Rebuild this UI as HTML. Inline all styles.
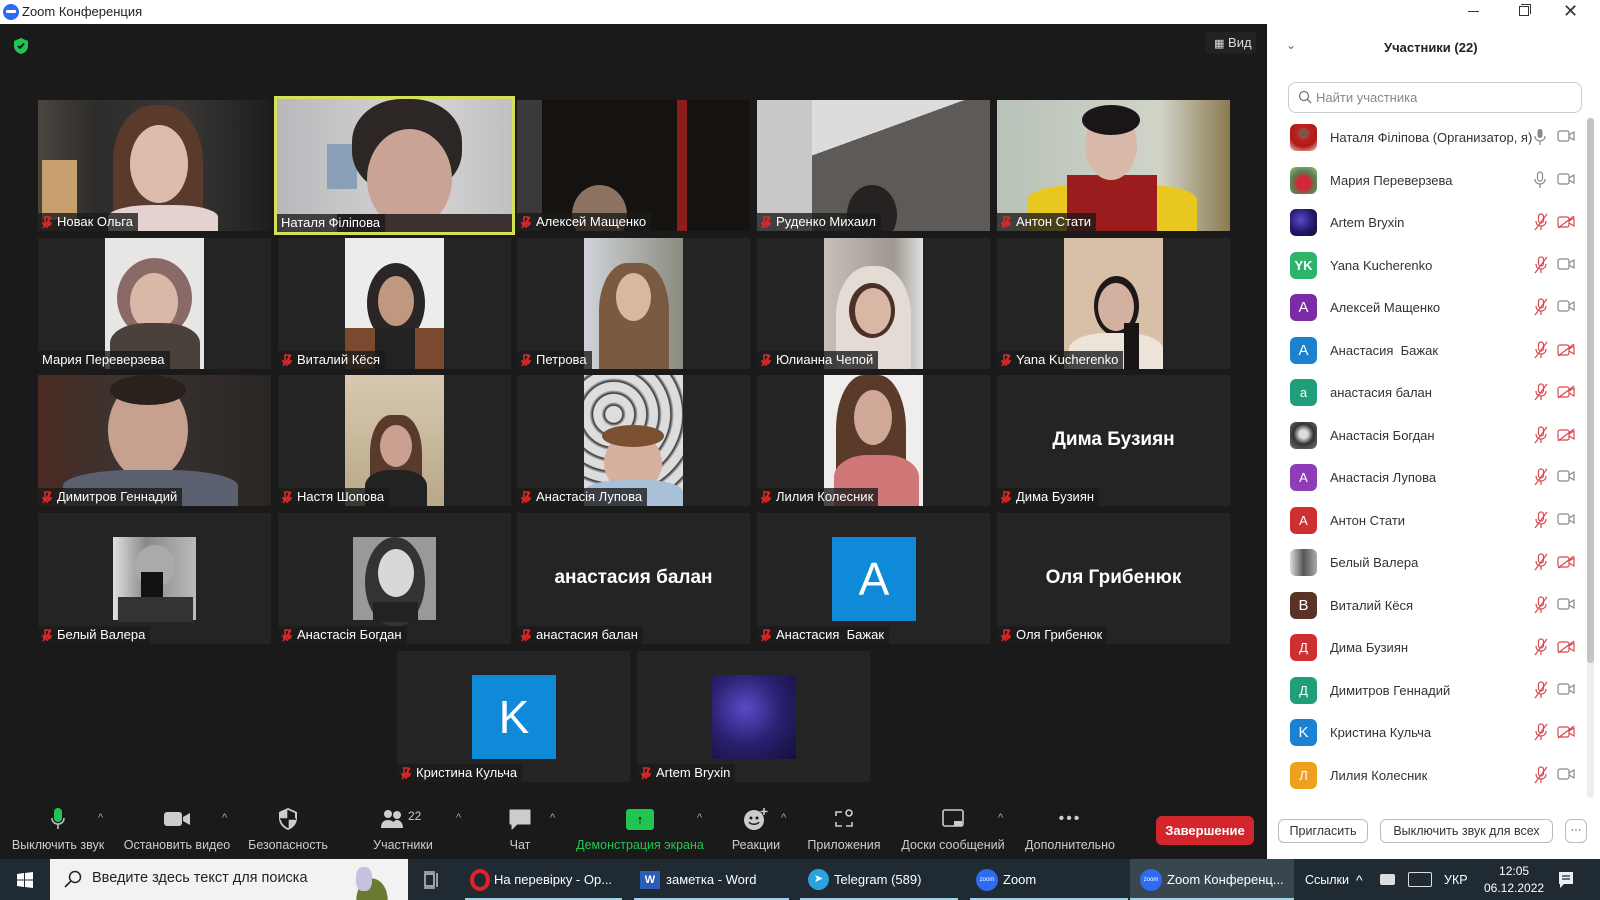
<!DOCTYPE html>
<html><head><meta charset="utf-8">
<style>
*{margin:0;padding:0;box-sizing:border-box}
body{width:1600px;height:900px;overflow:hidden;background:#1a1a1a;font-family:"Liberation Sans","DejaVu Sans",sans-serif;position:relative}
.abs{position:absolute}
#title{left:0;top:0;width:1600px;height:24px;background:#fff;font-size:13px;color:#222}
#main{left:0;top:24px;width:1267px;height:835px;background:#1a1a1a}
.t{position:absolute;width:233px;height:131px;background:#242424;overflow:hidden}
.ph{position:absolute;left:67px;top:0;width:99px;height:131px;overflow:hidden}
.f{position:absolute;border-radius:50%}
.lb{position:absolute;left:0;bottom:0;height:18px;line-height:18px;background:rgba(25,25,25,.78);color:#fff;font-size:13px;padding:0 5px 0 4px;white-space:nowrap;display:flex;align-items:center}
.lb svg{margin-right:5px}
.big{position:absolute;left:0;right:0;top:54px;text-align:center;color:#fff;font-weight:bold;font-size:19px}
.tb{position:absolute;top:806px;color:#ccc;font-size:12.5px;text-align:center;white-space:nowrap}
.tb .ic{height:26px;display:flex;justify-content:center;align-items:center}
.tb .lab{margin-top:6px}
.car{position:absolute;top:812px;color:#aaa;font-size:11px}
#panel{left:1267px;top:24px;width:333px;height:835px;background:#fff}
.row{position:absolute;left:1290px;height:27px;display:flex;align-items:center;width:300px}
.av{width:27px;height:27px;border-radius:6px;color:#fff;font-size:15px;display:flex;align-items:center;justify-content:center;flex:none}
.nm{margin-left:13px;font-size:13px;color:#333;white-space:nowrap}
.mi{position:absolute;left:244px;top:4px}
.ca{position:absolute;left:267px;top:6px}
#task{left:0;top:859px;width:1600px;height:41px;background:#1f2a32}
.tk{position:absolute;top:0;height:41px;display:flex;align-items:center;color:#fff;font-size:13px;white-space:nowrap}
.ul{position:absolute;bottom:0;height:2px;background:#9fd3ea}
</style></head><body>

<div id="title" class="abs">
  <div class="abs" style="left:3px;top:4px;width:16px;height:16px;border-radius:50%;background:#2d6bf0"></div>
  <div class="abs" style="left:6px;top:10px;width:10px;height:3px;background:#fff;border-radius:1px"></div>
  <div class="abs" style="left:22px;top:4px">Zoom Конференция</div>
  <div class="abs" style="left:1468px;top:11px;width:11px;height:1px;background:#333"></div>
  <div class="abs" style="left:1519px;top:6px;width:10px;height:10px;border:1px solid #333"></div>
  <div class="abs" style="left:1521px;top:4px;width:10px;height:10px;border-top:1px solid #333;border-right:1px solid #333"></div>
  <div class="abs" style="left:1563px;top:1px;font-size:18px;color:#333">✕</div>
</div>

<div id="main" class="abs">
  <svg class="abs" style="left:13px;top:13px" width="16" height="18" viewBox="0 0 16 18"><path d="M8 1 L15 4 V9 C15 13 12 16 8 17 C4 16 1 13 1 9 V4 Z" fill="#23c552"/><path d="M5 9 L7 11 L11 6.5" stroke="#111" stroke-width="1.8" fill="none"/></svg>
  <div class="abs" style="left:1206px;top:8px;width:50px;height:22px;border-radius:4px;background:#222;color:#ddd;font-size:13px;line-height:22px;padding-left:8px"><span style="font-size:11px">▦</span> Вид</div>
</div>

<!-- ROW 1 -->
<div class="t" style="left:38px;top:100px;background:linear-gradient(90deg,#4a4540 0,#2e2c2a 25%,#3a3836 60%,#1e1e1e 100%)">
  <div class="abs" style="left:4px;top:60px;width:35px;height:60px;background:#c8a070"></div>
  <div class="f" style="left:75px;top:5px;width:90px;height:125px;background:#5a3a2a;border-radius:45% 45% 10% 10%"></div>
  <div class="f" style="left:92px;top:25px;width:58px;height:78px;background:#dcbcad"></div>
  <div class="abs" style="left:70px;top:105px;width:110px;height:30px;background:#e4d2d0;border-radius:40% 40% 0 0"></div>
  <div class="lb"><svg width="10" height="13" viewBox="0 0 10 13"><path d="M3 1h4v7H3z M1 6c0 3 2 4 4 4s4-1 4-4 M5 10v2 M1 12L9 1" stroke="#e02828" stroke-width="1.6" fill="none"/></svg>Новак Ольга</div>
</div>
<div class="t" style="left:274px;top:96px;width:241px;height:139px;background:#d4e157;padding:3px">
  <div style="position:relative;width:235px;height:133px;overflow:hidden;background:linear-gradient(90deg,#b8b8bc,#d6d6d6 60%,#c0c0c2)">
    <div class="abs" style="left:50px;top:45px;width:30px;height:45px;background:#8aa0b8"></div>
    <div class="f" style="left:75px;top:0;width:110px;height:95px;background:#2c2624;border-radius:45%"></div>
    <div class="f" style="left:90px;top:30px;width:85px;height:100px;background:#c9a496"></div>
    <div class="abs" style="left:60px;top:115px;width:175px;height:20px;background:#3a3030"></div>
    <div class="lb" style="color:#fff">Наталя Філіпова</div>
  </div>
</div>
<div class="t" style="left:517px;top:100px;background:#15120f">
  <div class="abs" style="left:0;top:0;width:25px;height:131px;background:#3a3a3a"></div>
  <div class="abs" style="left:160px;top:0;width:10px;height:131px;background:#8a1e1a"></div>
  <div class="f" style="left:55px;top:85px;width:55px;height:60px;background:#8c7260"></div>
  <div class="lb"><svg width="10" height="13" viewBox="0 0 10 13"><path d="M3 1h4v7H3z M1 6c0 3 2 4 4 4s4-1 4-4 M5 10v2 M1 12L9 1" stroke="#e02828" stroke-width="1.6" fill="none"/></svg>Алексей Мащенко</div>
</div>
<div class="t" style="left:757px;top:100px;background:#5e5a58">
  <div class="abs" style="left:0;top:0;width:233px;height:131px;background:linear-gradient(160deg,#dcdcdc 0,#dcdcdc 35%,transparent 35%)"></div>
  <div class="abs" style="left:0;top:0;width:55px;height:131px;background:#c8c8c8"></div>
  <div class="f" style="left:90px;top:85px;width:50px;height:60px;background:#262222"></div>
  <div class="lb"><svg width="10" height="13" viewBox="0 0 10 13"><path d="M3 1h4v7H3z M1 6c0 3 2 4 4 4s4-1 4-4 M5 10v2 M1 12L9 1" stroke="#e02828" stroke-width="1.6" fill="none"/></svg>Руденко Михаил</div>
</div>
<div class="t" style="left:997px;top:100px;background:linear-gradient(90deg,#b8c2b8,#d0d4c8 70%,#8a7a50)">
  <div class="abs" style="left:30px;top:85px;width:170px;height:50px;background:#e8c820;border-radius:30% 30% 0 0"></div>
  <div class="abs" style="left:70px;top:75px;width:90px;height:60px;background:#9a1c1c"></div>
  <div class="f" style="left:88px;top:10px;width:52px;height:70px;background:#d8b8a8"></div>
  <div class="f" style="left:85px;top:5px;width:58px;height:30px;background:#1a1618"></div>
  <div class="lb"><svg width="10" height="13" viewBox="0 0 10 13"><path d="M3 1h4v7H3z M1 6c0 3 2 4 4 4s4-1 4-4 M5 10v2 M1 12L9 1" stroke="#e02828" stroke-width="1.6" fill="none"/></svg>Антон Стати</div>
</div>

<!-- ROW 2 -->
<div class="t" style="left:38px;top:238px">
  <div class="ph" style="background:#e8e6e4"><div class="f" style="left:12px;top:20px;width:75px;height:80px;background:#8a6a66"></div><div class="f" style="left:25px;top:35px;width:48px;height:58px;background:#dab8a8"></div><div class="abs" style="left:5px;top:85px;width:90px;height:50px;background:#4a403c;border-radius:40% 40% 0 0"></div></div>
  <div class="lb">Мария Переверзева</div>
</div>
<div class="t" style="left:278px;top:238px">
  <div class="ph" style="background:#ececec"><div class="f" style="left:22px;top:25px;width:58px;height:80px;background:#2a2626"></div><div class="f" style="left:33px;top:38px;width:36px;height:50px;background:#c09880"></div><div class="abs" style="left:0;top:90px;width:99px;height:45px;background:#7a4a30"></div><div class="abs" style="left:30px;top:90px;width:40px;height:45px;background:#222"></div></div>
  <div class="lb"><svg width="10" height="13" viewBox="0 0 10 13"><path d="M3 1h4v7H3z M1 6c0 3 2 4 4 4s4-1 4-4 M5 10v2 M1 12L9 1" stroke="#e02828" stroke-width="1.6" fill="none"/></svg>Виталий Кёся</div>
</div>
<div class="t" style="left:517px;top:238px">
  <div class="ph" style="background:linear-gradient(90deg,#d0d4d8,#8a8a80)"><div class="f" style="left:15px;top:25px;width:70px;height:120px;background:#7a5a40;border-radius:40% 40% 10% 10%"></div><div class="f" style="left:32px;top:35px;width:35px;height:48px;background:#d8b8a0"></div></div>
  <div class="lb"><svg width="10" height="13" viewBox="0 0 10 13"><path d="M3 1h4v7H3z M1 6c0 3 2 4 4 4s4-1 4-4 M5 10v2 M1 12L9 1" stroke="#e02828" stroke-width="1.6" fill="none"/></svg>Петрова</div>
</div>
<div class="t" style="left:757px;top:238px">
  <div class="ph" style="background:linear-gradient(90deg,#c8c0b8,#a09890 70%,#e0e0e0)"><div class="f" style="left:12px;top:28px;width:75px;height:110px;background:#e4dcd4;border-radius:45% 45% 10% 10%"></div><div class="f" style="left:25px;top:45px;width:46px;height:55px;background:#4a3028"></div><div class="f" style="left:31px;top:50px;width:36px;height:46px;background:#d8b8a4"></div></div>
  <div class="lb"><svg width="10" height="13" viewBox="0 0 10 13"><path d="M3 1h4v7H3z M1 6c0 3 2 4 4 4s4-1 4-4 M5 10v2 M1 12L9 1" stroke="#e02828" stroke-width="1.6" fill="none"/></svg>Юлианна Чепой</div>
</div>
<div class="t" style="left:997px;top:238px">
  <div class="ph" style="background:#d8c0a8"><div class="f" style="left:30px;top:38px;width:45px;height:60px;background:#1e1818"></div><div class="f" style="left:34px;top:45px;width:36px;height:48px;background:#d4b0a0"></div><div class="abs" style="left:5px;top:95px;width:94px;height:40px;background:#ece4d8;border-radius:40% 40% 0 0"></div><div class="abs" style="left:60px;top:85px;width:15px;height:50px;background:#181414"></div></div>
  <div class="lb"><svg width="10" height="13" viewBox="0 0 10 13"><path d="M3 1h4v7H3z M1 6c0 3 2 4 4 4s4-1 4-4 M5 10v2 M1 12L9 1" stroke="#e02828" stroke-width="1.6" fill="none"/></svg>Yana Kucherenko</div>
</div>

<!-- ROW 3 -->
<div class="t" style="left:38px;top:375px;background:linear-gradient(90deg,#4a2a22,#3a3432 40%,#2a2624)">
  <div class="f" style="left:70px;top:5px;width:80px;height:100px;background:#c8a090"></div>
  <div class="f" style="left:72px;top:0;width:76px;height:30px;background:#2a201c"></div>
  <div class="abs" style="left:25px;top:95px;width:175px;height:40px;background:#5a6070;border-radius:40% 40% 0 0"></div>
  <div class="lb"><svg width="10" height="13" viewBox="0 0 10 13"><path d="M3 1h4v7H3z M1 6c0 3 2 4 4 4s4-1 4-4 M5 10v2 M1 12L9 1" stroke="#e02828" stroke-width="1.6" fill="none"/></svg>Димитров Геннадий</div>
</div>
<div class="t" style="left:278px;top:375px">
  <div class="ph" style="background:linear-gradient(#d8c8b0,#b8a888)"><div class="f" style="left:25px;top:40px;width:52px;height:95px;background:#5a3a2a;border-radius:40% 40% 10% 10%"></div><div class="f" style="left:35px;top:50px;width:32px;height:42px;background:#caa090"></div><div class="abs" style="left:20px;top:95px;width:62px;height:40px;background:#222;border-radius:40% 40% 0 0"></div></div>
  <div class="lb"><svg width="10" height="13" viewBox="0 0 10 13"><path d="M3 1h4v7H3z M1 6c0 3 2 4 4 4s4-1 4-4 M5 10v2 M1 12L9 1" stroke="#e02828" stroke-width="1.6" fill="none"/></svg>Настя Шопова</div>
</div>
<div class="t" style="left:517px;top:375px">
  <div class="ph" style="background:repeating-radial-gradient(circle at 30% 30%,#ddd 0,#ddd 8px,#333 9px,#ccc 12px)"><div class="f" style="left:20px;top:58px;width:58px;height:60px;background:#d8b0a0"></div><div class="f" style="left:18px;top:50px;width:62px;height:22px;background:#7a5030"></div><div class="abs" style="left:0;top:105px;width:99px;height:30px;background:#a8c0d8;border-radius:40% 40% 0 0"></div></div>
  <div class="lb"><svg width="10" height="13" viewBox="0 0 10 13"><path d="M3 1h4v7H3z M1 6c0 3 2 4 4 4s4-1 4-4 M5 10v2 M1 12L9 1" stroke="#e02828" stroke-width="1.6" fill="none"/></svg>Анастасія Лупова</div>
</div>
<div class="t" style="left:757px;top:375px">
  <div class="ph" style="background:#f0eeec"><div class="f" style="left:12px;top:0;width:70px;height:135px;background:#5a3a28;border-radius:40% 40% 10% 10%"></div><div class="f" style="left:30px;top:15px;width:38px;height:55px;background:#d0a898"></div><div class="abs" style="left:10px;top:80px;width:85px;height:55px;background:#d07878;border-radius:40% 40% 0 0"></div></div>
  <div class="lb"><svg width="10" height="13" viewBox="0 0 10 13"><path d="M3 1h4v7H3z M1 6c0 3 2 4 4 4s4-1 4-4 M5 10v2 M1 12L9 1" stroke="#e02828" stroke-width="1.6" fill="none"/></svg>Лилия Колесник</div>
</div>
<div class="t" style="left:997px;top:375px">
  <div class="big">Дима Бузиян</div>
  <div class="lb"><svg width="10" height="13" viewBox="0 0 10 13"><path d="M3 1h4v7H3z M1 6c0 3 2 4 4 4s4-1 4-4 M5 10v2 M1 12L9 1" stroke="#e02828" stroke-width="1.6" fill="none"/></svg>Дима Бузиян</div>
</div>

<!-- ROW 4 -->
<div class="t" style="left:38px;top:513px">
  <div class="abs" style="left:75px;top:24px;width:83px;height:83px;background:linear-gradient(90deg,#e0e0e0,#888 40%,#bbb)"><div class="f" style="left:22px;top:8px;width:40px;height:42px;background:#aaa"></div><div class="abs" style="left:28px;top:35px;width:22px;height:30px;background:#111"></div><div class="abs" style="left:5px;top:60px;width:75px;height:25px;background:#333"></div></div>
  <div class="lb"><svg width="10" height="13" viewBox="0 0 10 13"><path d="M3 1h4v7H3z M1 6c0 3 2 4 4 4s4-1 4-4 M5 10v2 M1 12L9 1" stroke="#e02828" stroke-width="1.6" fill="none"/></svg>Белый Валера</div>
</div>
<div class="t" style="left:278px;top:513px">
  <div class="abs" style="left:75px;top:24px;width:83px;height:83px;background:#999"><div class="f" style="left:12px;top:0;width:60px;height:90px;background:#333"></div><div class="f" style="left:25px;top:12px;width:36px;height:48px;background:#d8d8d8"></div><div class="abs" style="left:20px;top:65px;width:45px;height:20px;background:#222"></div></div>
  <div class="lb"><svg width="10" height="13" viewBox="0 0 10 13"><path d="M3 1h4v7H3z M1 6c0 3 2 4 4 4s4-1 4-4 M5 10v2 M1 12L9 1" stroke="#e02828" stroke-width="1.6" fill="none"/></svg>Анастасія Богдан</div>
</div>
<div class="t" style="left:517px;top:513px">
  <div class="big">анастасия балан</div>
  <div class="lb"><svg width="10" height="13" viewBox="0 0 10 13"><path d="M3 1h4v7H3z M1 6c0 3 2 4 4 4s4-1 4-4 M5 10v2 M1 12L9 1" stroke="#e02828" stroke-width="1.6" fill="none"/></svg>анастасия балан</div>
</div>
<div class="t" style="left:757px;top:513px">
  <div class="abs" style="left:75px;top:24px;width:84px;height:84px;background:#0e8ad8;color:#fff;font-size:46px;text-align:center;line-height:84px">A</div>
  <div class="lb"><svg width="10" height="13" viewBox="0 0 10 13"><path d="M3 1h4v7H3z M1 6c0 3 2 4 4 4s4-1 4-4 M5 10v2 M1 12L9 1" stroke="#e02828" stroke-width="1.6" fill="none"/></svg>Анастасия&nbsp; Бажак</div>
</div>
<div class="t" style="left:997px;top:513px">
  <div class="big">Оля Грибенюк</div>
  <div class="lb"><svg width="10" height="13" viewBox="0 0 10 13"><path d="M3 1h4v7H3z M1 6c0 3 2 4 4 4s4-1 4-4 M5 10v2 M1 12L9 1" stroke="#e02828" stroke-width="1.6" fill="none"/></svg>Оля Грибенюк</div>
</div>

<!-- ROW 5 -->
<div class="t" style="left:397px;top:651px">
  <div class="abs" style="left:75px;top:24px;width:84px;height:84px;background:#0e8ad8;color:#fff;font-size:46px;text-align:center;line-height:84px">K</div>
  <div class="lb"><svg width="10" height="13" viewBox="0 0 10 13"><path d="M3 1h4v7H3z M1 6c0 3 2 4 4 4s4-1 4-4 M5 10v2 M1 12L9 1" stroke="#e02828" stroke-width="1.6" fill="none"/></svg>Кристина Кульча</div>
</div>
<div class="t" style="left:637px;top:651px">
  <div class="abs" style="left:75px;top:24px;width:84px;height:84px;background:radial-gradient(ellipse at 40% 40%,#5a4ac8,#2a2070 50%,#12103a)"></div>
  <div class="lb"><svg width="10" height="13" viewBox="0 0 10 13"><path d="M3 1h4v7H3z M1 6c0 3 2 4 4 4s4-1 4-4 M5 10v2 M1 12L9 1" stroke="#e02828" stroke-width="1.6" fill="none"/></svg>Artem Bryxin</div>
</div>

<!-- TOOLBAR -->
<div class="tb" style="left:10px;width:96px"><div class="ic"><svg width="14" height="24" viewBox="0 0 14 24"><rect x="3" y="1" width="8" height="14" rx="4" fill="#23c552"/><path d="M1 11c0 4 3 6 6 6s6-2 6-6 M7 17v5" stroke="#bbb" stroke-width="1.6" fill="none"/></svg></div><div class="lab">Выключить звук</div></div>
<div class="car" style="left:98px">^</div>
<div class="tb" style="left:122px;width:110px"><div class="ic"><svg width="28" height="18" viewBox="0 0 28 18"><rect x="1" y="2" width="18" height="14" rx="3" fill="#ccc"/><path d="M20 7l7-4v12l-7-4z" fill="#ccc"/></svg></div><div class="lab">Остановить видео</div></div>
<div class="car" style="left:222px">^</div>
<div class="tb" style="left:246px;width:84px"><div class="ic"><svg width="20" height="24" viewBox="0 0 20 24"><path d="M10 1L19 5V11C19 17 15 21 10 23C5 21 1 17 1 11V5Z" fill="#ccc"/><path d="M10 3V21 M2 12H18" stroke="#1a1a1a" stroke-width="1.4"/><path d="M10 3L17 6V12H10Z M3 12H10V21C6 19 3 16 3 12Z" fill="#1a1a1a"/></svg></div><div class="lab">Безопасность</div></div>
<div class="tb" style="left:368px;width:70px"><div class="ic"><svg width="46" height="22" viewBox="0 0 46 22"><circle cx="8" cy="6" r="4" fill="#ccc"/><circle cx="17" cy="7" r="4" fill="#ccc"/><path d="M1 20c0-6 3-8 7-8s6 2 6 4v4z M12 20c0-5 2-8 5-8s6 3 6 8z" fill="#ccc"/><text x="28" y="12" fill="#ccc" font-size="12" font-family="Liberation Sans">22</text></svg></div><div class="lab">Участники</div></div>
<div class="car" style="left:456px">^</div>
<div class="tb" style="left:500px;width:40px"><div class="ic"><svg width="24" height="24" viewBox="0 0 24 24"><path d="M2 3h20v14H9l-5 5v-5H2z" fill="#ccc" stroke="#ccc" stroke-linejoin="round"/></svg></div><div class="lab">Чат</div></div>
<div class="car" style="left:550px">^</div>
<div class="tb" style="left:573px;width:134px;color:#23c552"><div class="ic"><div style="width:28px;height:21px;background:#23c552;border-radius:3px;color:#000;font-size:13px;line-height:21px;font-weight:bold">↑</div></div><div class="lab">Демонстрация экрана</div></div>
<div class="car" style="left:697px">^</div>
<div class="tb" style="left:728px;width:56px"><div class="ic"><svg width="26" height="24" viewBox="0 0 26 24"><circle cx="11" cy="13" r="10" fill="#ccc"/><circle cx="8" cy="11" r="1.5" fill="#1a1a1a"/><circle cx="14" cy="11" r="1.5" fill="#1a1a1a"/><path d="M6 15c2 3 8 3 10 0" stroke="#1a1a1a" stroke-width="1.5" fill="none"/><path d="M21 1v7 M17.5 4.5h7" stroke="#ccc" stroke-width="1.6"/></svg></div><div class="lab">Реакции</div></div>
<div class="car" style="left:781px">^</div>
<div class="tb" style="left:804px;width:80px"><div class="ic"><svg width="20" height="22" viewBox="0 0 20 22"><path d="M2 8V4h6 M2 14v4h6 M12 18h6v-4" stroke="#ccc" stroke-width="1.6" fill="none"/><circle cx="15" cy="5" r="3" stroke="#ccc" stroke-width="1.6" fill="none"/></svg></div><div class="lab">Приложения</div></div>
<div class="tb" style="left:898px;width:110px"><div class="ic"><svg width="22" height="20" viewBox="0 0 22 20"><rect x="1" y="1" width="20" height="16" rx="2" stroke="#ccc" stroke-width="1.6" fill="none"/><rect x="12" y="12" width="8" height="5" fill="#ccc"/></svg></div><div class="lab">Доски сообщений</div></div>
<div class="car" style="left:998px">^</div>
<div class="tb" style="left:1022px;width:96px"><div class="ic" style="color:#ccc;font-size:16px;letter-spacing:2px">•••</div><div class="lab">Дополнительно</div></div>
<div class="abs" style="left:1156px;top:816px;width:98px;height:29px;background:#d2262c;border-radius:6px;color:#fff;font-size:13px;font-weight:bold;text-align:center;line-height:29px">Завершение</div>

<!-- PANEL -->
<div id="panel" class="abs"></div>
<div class="abs" style="left:1286px;top:38px;color:#666;font-size:12px">⌄</div>
<div class="abs" style="left:1384px;top:40px;font-size:13px;font-weight:bold;color:#222">Участники (22)</div>
<div class="abs" style="left:1288px;top:82px;width:294px;height:31px;border:1px solid #ccc;border-radius:8px"></div>
<svg class="abs" style="left:1298px;top:90px" width="14" height="14" viewBox="0 0 14 14"><circle cx="6" cy="6" r="4.5" stroke="#777" stroke-width="1.3" fill="none"/><path d="M9.5 9.5L13 13" stroke="#777" stroke-width="1.3"/></svg>
<div class="abs" style="left:1316px;top:90px;font-size:13px;color:#888">Найти участника</div>
<div class="abs" style="left:1587px;top:118px;width:7px;height:680px;background:#eee;border-radius:3px"></div>
<div class="abs" style="left:1587px;top:118px;width:7px;height:545px;background:#c4c4c4;border-radius:3px"></div>

<div class="row" style="top:124px"><div class="av" style="background:radial-gradient(circle at 50% 35%,#8a5040 25%,#c42020 26%,#b01818 60%,#e8e0c8)"></div><div class="nm">Наталя Філіпова (Организатор, я)</div><svg class="mi" width="12" height="18" viewBox="0 0 12 18"><rect x="3.5" y="1" width="5" height="9" rx="2.5" fill="#888"/><path d="M1 8c0 3 2 5 5 5s5-2 5-5 M6 13v4" stroke="#888" stroke-width="1.2" fill="none"/></svg><svg class="ca" width="18" height="12" viewBox="0 0 18 12"><rect x="1" y="1" width="11" height="10" rx="2" stroke="#888" stroke-width="1.2" fill="none"/><path d="M12 5l5-3v8l-5-3" stroke="#888" stroke-width="1.2" fill="none"/></svg></div>
<div class="row" style="top:167px"><div class="av" style="background:radial-gradient(circle at 50% 60%,#d02838 30%,#4a8a5a 60%,#c8b068)"></div><div class="nm">Мария Переверзева</div><svg class="mi" width="12" height="18" viewBox="0 0 12 18"><rect x="3.5" y="1" width="5" height="9" rx="2.5" stroke="#888" stroke-width="1.2" fill="none"/><path d="M1 8c0 3 2 5 5 5s5-2 5-5 M6 13v4" stroke="#888" stroke-width="1.2" fill="none"/></svg><svg class="ca" width="18" height="12" viewBox="0 0 18 12"><rect x="1" y="1" width="11" height="10" rx="2" stroke="#888" stroke-width="1.2" fill="none"/><path d="M12 5l5-3v8l-5-3" stroke="#888" stroke-width="1.2" fill="none"/></svg></div>
<div class="row" style="top:209px"><div class="av" style="background:radial-gradient(ellipse at 40% 40%,#5a4ac8,#22186a 55%,#0e0c30)"></div><div class="nm">Artem Bryxin</div><svg class="mi" width="14" height="18" viewBox="0 0 14 18"><rect x="4.5" y="1" width="5" height="9" rx="2.5" stroke="#d8484f" stroke-width="1.2" fill="none"/><path d="M2 8c0 3 2 5 5 5s5-2 5-5 M7 13v4 M1 17L13 1" stroke="#d8484f" stroke-width="1.2" fill="none"/></svg><svg class="ca" width="18" height="14" viewBox="0 0 18 14"><rect x="1" y="2" width="11" height="10" rx="2" stroke="#d8484f" stroke-width="1.2" fill="none"/><path d="M12 6l5-3v8l-5-3 M1 13L17 1" stroke="#d8484f" stroke-width="1.2" fill="none"/></svg></div>
<div class="row" style="top:252px"><div class="av" style="background:#2db36a;font-size:13px;font-weight:bold">YK</div><div class="nm">Yana Kucherenko</div><svg class="mi" width="14" height="18" viewBox="0 0 14 18"><rect x="4.5" y="1" width="5" height="9" rx="2.5" stroke="#d8484f" stroke-width="1.2" fill="none"/><path d="M2 8c0 3 2 5 5 5s5-2 5-5 M7 13v4 M1 17L13 1" stroke="#d8484f" stroke-width="1.2" fill="none"/></svg><svg class="ca" width="18" height="12" viewBox="0 0 18 12"><rect x="1" y="1" width="11" height="10" rx="2" stroke="#888" stroke-width="1.2" fill="none"/><path d="M12 5l5-3v8l-5-3" stroke="#888" stroke-width="1.2" fill="none"/></svg></div>
<div class="row" style="top:294px"><div class="av" style="background:#7b2aa8">A</div><div class="nm">Алексей Мащенко</div><svg class="mi" width="14" height="18" viewBox="0 0 14 18"><rect x="4.5" y="1" width="5" height="9" rx="2.5" stroke="#d8484f" stroke-width="1.2" fill="none"/><path d="M2 8c0 3 2 5 5 5s5-2 5-5 M7 13v4 M1 17L13 1" stroke="#d8484f" stroke-width="1.2" fill="none"/></svg><svg class="ca" width="18" height="12" viewBox="0 0 18 12"><rect x="1" y="1" width="11" height="10" rx="2" stroke="#888" stroke-width="1.2" fill="none"/><path d="M12 5l5-3v8l-5-3" stroke="#888" stroke-width="1.2" fill="none"/></svg></div>
<div class="row" style="top:337px"><div class="av" style="background:#1a82d0">A</div><div class="nm">Анастасия&nbsp; Бажак</div><svg class="mi" width="14" height="18" viewBox="0 0 14 18"><rect x="4.5" y="1" width="5" height="9" rx="2.5" stroke="#d8484f" stroke-width="1.2" fill="none"/><path d="M2 8c0 3 2 5 5 5s5-2 5-5 M7 13v4 M1 17L13 1" stroke="#d8484f" stroke-width="1.2" fill="none"/></svg><svg class="ca" width="18" height="14" viewBox="0 0 18 14"><rect x="1" y="2" width="11" height="10" rx="2" stroke="#d8484f" stroke-width="1.2" fill="none"/><path d="M12 6l5-3v8l-5-3 M1 13L17 1" stroke="#d8484f" stroke-width="1.2" fill="none"/></svg></div>
<div class="row" style="top:379px"><div class="av" style="background:#1f9e7a;font-size:13px">a</div><div class="nm">анастасия балан</div><svg class="mi" width="14" height="18" viewBox="0 0 14 18"><rect x="4.5" y="1" width="5" height="9" rx="2.5" stroke="#d8484f" stroke-width="1.2" fill="none"/><path d="M2 8c0 3 2 5 5 5s5-2 5-5 M7 13v4 M1 17L13 1" stroke="#d8484f" stroke-width="1.2" fill="none"/></svg><svg class="ca" width="18" height="14" viewBox="0 0 18 14"><rect x="1" y="2" width="11" height="10" rx="2" stroke="#d8484f" stroke-width="1.2" fill="none"/><path d="M12 6l5-3v8l-5-3 M1 13L17 1" stroke="#d8484f" stroke-width="1.2" fill="none"/></svg></div>
<div class="row" style="top:422px"><div class="av" style="background:radial-gradient(circle at 50% 45%,#ddd 20%,#333 50%,#777)"></div><div class="nm">Анастасія Богдан</div><svg class="mi" width="14" height="18" viewBox="0 0 14 18"><rect x="4.5" y="1" width="5" height="9" rx="2.5" stroke="#d8484f" stroke-width="1.2" fill="none"/><path d="M2 8c0 3 2 5 5 5s5-2 5-5 M7 13v4 M1 17L13 1" stroke="#d8484f" stroke-width="1.2" fill="none"/></svg><svg class="ca" width="18" height="14" viewBox="0 0 18 14"><rect x="1" y="2" width="11" height="10" rx="2" stroke="#d8484f" stroke-width="1.2" fill="none"/><path d="M12 6l5-3v8l-5-3 M1 13L17 1" stroke="#d8484f" stroke-width="1.2" fill="none"/></svg></div>
<div class="row" style="top:464px"><div class="av" style="background:#8e3cb8;font-size:13px">A</div><div class="nm">Анастасія Лупова</div><svg class="mi" width="14" height="18" viewBox="0 0 14 18"><rect x="4.5" y="1" width="5" height="9" rx="2.5" stroke="#d8484f" stroke-width="1.2" fill="none"/><path d="M2 8c0 3 2 5 5 5s5-2 5-5 M7 13v4 M1 17L13 1" stroke="#d8484f" stroke-width="1.2" fill="none"/></svg><svg class="ca" width="18" height="12" viewBox="0 0 18 12"><rect x="1" y="1" width="11" height="10" rx="2" stroke="#888" stroke-width="1.2" fill="none"/><path d="M12 5l5-3v8l-5-3" stroke="#888" stroke-width="1.2" fill="none"/></svg></div>
<div class="row" style="top:507px"><div class="av" style="background:#cc3030;font-size:13px">A</div><div class="nm">Антон Стати</div><svg class="mi" width="14" height="18" viewBox="0 0 14 18"><rect x="4.5" y="1" width="5" height="9" rx="2.5" stroke="#d8484f" stroke-width="1.2" fill="none"/><path d="M2 8c0 3 2 5 5 5s5-2 5-5 M7 13v4 M1 17L13 1" stroke="#d8484f" stroke-width="1.2" fill="none"/></svg><svg class="ca" width="18" height="12" viewBox="0 0 18 12"><rect x="1" y="1" width="11" height="10" rx="2" stroke="#888" stroke-width="1.2" fill="none"/><path d="M12 5l5-3v8l-5-3" stroke="#888" stroke-width="1.2" fill="none"/></svg></div>
<div class="row" style="top:549px"><div class="av" style="background:linear-gradient(90deg,#ddd,#555 50%,#aaa)"></div><div class="nm">Белый Валера</div><svg class="mi" width="14" height="18" viewBox="0 0 14 18"><rect x="4.5" y="1" width="5" height="9" rx="2.5" stroke="#d8484f" stroke-width="1.2" fill="none"/><path d="M2 8c0 3 2 5 5 5s5-2 5-5 M7 13v4 M1 17L13 1" stroke="#d8484f" stroke-width="1.2" fill="none"/></svg><svg class="ca" width="18" height="14" viewBox="0 0 18 14"><rect x="1" y="2" width="11" height="10" rx="2" stroke="#d8484f" stroke-width="1.2" fill="none"/><path d="M12 6l5-3v8l-5-3 M1 13L17 1" stroke="#d8484f" stroke-width="1.2" fill="none"/></svg></div>
<div class="row" style="top:592px"><div class="av" style="background:#5a3228">B</div><div class="nm">Виталий Кёся</div><svg class="mi" width="14" height="18" viewBox="0 0 14 18"><rect x="4.5" y="1" width="5" height="9" rx="2.5" stroke="#d8484f" stroke-width="1.2" fill="none"/><path d="M2 8c0 3 2 5 5 5s5-2 5-5 M7 13v4 M1 17L13 1" stroke="#d8484f" stroke-width="1.2" fill="none"/></svg><svg class="ca" width="18" height="12" viewBox="0 0 18 12"><rect x="1" y="1" width="11" height="10" rx="2" stroke="#888" stroke-width="1.2" fill="none"/><path d="M12 5l5-3v8l-5-3" stroke="#888" stroke-width="1.2" fill="none"/></svg></div>
<div class="row" style="top:634px"><div class="av" style="background:#cc3030;font-size:13px">Д</div><div class="nm">Дима Бузиян</div><svg class="mi" width="14" height="18" viewBox="0 0 14 18"><rect x="4.5" y="1" width="5" height="9" rx="2.5" stroke="#d8484f" stroke-width="1.2" fill="none"/><path d="M2 8c0 3 2 5 5 5s5-2 5-5 M7 13v4 M1 17L13 1" stroke="#d8484f" stroke-width="1.2" fill="none"/></svg><svg class="ca" width="18" height="14" viewBox="0 0 18 14"><rect x="1" y="2" width="11" height="10" rx="2" stroke="#d8484f" stroke-width="1.2" fill="none"/><path d="M12 6l5-3v8l-5-3 M1 13L17 1" stroke="#d8484f" stroke-width="1.2" fill="none"/></svg></div>
<div class="row" style="top:677px"><div class="av" style="background:#1f9e7a;font-size:13px">Д</div><div class="nm">Димитров Геннадий</div><svg class="mi" width="14" height="18" viewBox="0 0 14 18"><rect x="4.5" y="1" width="5" height="9" rx="2.5" stroke="#d8484f" stroke-width="1.2" fill="none"/><path d="M2 8c0 3 2 5 5 5s5-2 5-5 M7 13v4 M1 17L13 1" stroke="#d8484f" stroke-width="1.2" fill="none"/></svg><svg class="ca" width="18" height="12" viewBox="0 0 18 12"><rect x="1" y="1" width="11" height="10" rx="2" stroke="#888" stroke-width="1.2" fill="none"/><path d="M12 5l5-3v8l-5-3" stroke="#888" stroke-width="1.2" fill="none"/></svg></div>
<div class="row" style="top:719px"><div class="av" style="background:#1a82d0">K</div><div class="nm">Кристина Кульча</div><svg class="mi" width="14" height="18" viewBox="0 0 14 18"><rect x="4.5" y="1" width="5" height="9" rx="2.5" stroke="#d8484f" stroke-width="1.2" fill="none"/><path d="M2 8c0 3 2 5 5 5s5-2 5-5 M7 13v4 M1 17L13 1" stroke="#d8484f" stroke-width="1.2" fill="none"/></svg><svg class="ca" width="18" height="14" viewBox="0 0 18 14"><rect x="1" y="2" width="11" height="10" rx="2" stroke="#d8484f" stroke-width="1.2" fill="none"/><path d="M12 6l5-3v8l-5-3 M1 13L17 1" stroke="#d8484f" stroke-width="1.2" fill="none"/></svg></div>
<div class="row" style="top:762px"><div class="av" style="background:#f0a020;font-size:13px">Л</div><div class="nm">Лилия Колесник</div><svg class="mi" width="14" height="18" viewBox="0 0 14 18"><rect x="4.5" y="1" width="5" height="9" rx="2.5" stroke="#d8484f" stroke-width="1.2" fill="none"/><path d="M2 8c0 3 2 5 5 5s5-2 5-5 M7 13v4 M1 17L13 1" stroke="#d8484f" stroke-width="1.2" fill="none"/></svg><svg class="ca" width="18" height="12" viewBox="0 0 18 12"><rect x="1" y="1" width="11" height="10" rx="2" stroke="#888" stroke-width="1.2" fill="none"/><path d="M12 5l5-3v8l-5-3" stroke="#888" stroke-width="1.2" fill="none"/></svg></div>

<div class="abs" style="left:1278px;top:819px;width:90px;height:24px;border:1px solid #bbb;border-radius:6px;font-size:12.5px;color:#333;text-align:center;line-height:22px">Пригласить</div>
<div class="abs" style="left:1380px;top:819px;width:173px;height:24px;border:1px solid #bbb;border-radius:6px;font-size:12.5px;color:#333;text-align:center;line-height:22px">Выключить звук для всех</div>
<div class="abs" style="left:1565px;top:819px;width:22px;height:24px;border:1px solid #bbb;border-radius:6px;font-size:11px;color:#333;text-align:center;line-height:20px">···</div>

<!-- TASKBAR -->
<div id="task" class="abs">
  <svg class="abs" style="left:17px;top:13px" width="16" height="16" viewBox="0 0 16 16"><path d="M0 2l7-1v6.5H0z M8 1l8-1v7.5H8z M0 8.5h7V15l-7-1z M8 8.5h8V16l-8-1z" fill="#fff"/></svg>
  <div class="abs" style="left:50px;top:0;width:358px;height:41px;background:#f2f2f2"></div>
  <svg class="abs" style="left:64px;top:11px" width="18" height="18" viewBox="0 0 18 18"><circle cx="11" cy="7" r="5.5" stroke="#222" stroke-width="1.5" fill="none"/><path d="M7 11L1 17" stroke="#222" stroke-width="1.6"/></svg>
  <div class="abs" style="left:92px;top:11px;font-size:14.5px;color:#222">Введите здесь текст для поиска</div>
  <div class="abs" style="left:345px;top:4px;width:45px;height:37px;background:radial-gradient(ellipse at 60% 100%,#6a7a30 40%,transparent 42%)"></div>
  <div class="f" style="left:356px;top:8px;width:16px;height:24px;background:#c8c0e0;border-radius:40%"></div>
  <svg class="abs" style="left:424px;top:12px" width="16" height="18" viewBox="0 0 16 18"><rect x="1" y="3" width="9" height="12" stroke="#ddd" stroke-width="1.3" fill="none"/><path d="M0 1h11 M0 17h11 M13 2v14" stroke="#ddd" stroke-width="1.3"/></svg>
  <div class="tk" style="left:470px"><div class="f" style="position:relative;width:20px;height:22px;border:4px solid #e0222a;border-radius:50%;margin-right:4px"></div>На перевірку - Ор...</div>
  <div class="ul" style="left:465px;width:157px"></div>
  <div class="tk" style="left:640px"><div style="width:20px;height:18px;background:#2b5eb8;color:#fff;font-size:11px;font-weight:bold;text-align:center;line-height:18px;margin-right:6px">W</div>заметка - Word</div>
  <div class="ul" style="left:634px;width:155px"></div>
  <div class="tk" style="left:808px"><div style="width:21px;height:21px;border-radius:50%;background:#2ba3e0;color:#fff;font-size:11px;text-align:center;line-height:21px;margin-right:5px">➤</div>Telegram (589)</div>
  <div class="ul" style="left:800px;width:158px"></div>
  <div class="tk" style="left:976px"><div style="width:22px;height:22px;border-radius:50%;background:#2d6bf0;color:#fff;font-size:6px;text-align:center;line-height:22px;margin-right:5px">zoom</div>Zoom</div>
  <div class="ul" style="left:970px;width:158px"></div>
  <div class="abs" style="left:1130px;top:0;width:164px;height:41px;background:#3a464e"></div>
  <div class="tk" style="left:1140px"><div style="width:22px;height:22px;border-radius:50%;background:#2d6bf0;color:#fff;font-size:6px;text-align:center;line-height:22px;margin-right:5px">zoom</div>Zoom Конференц...</div>
  <div class="ul" style="left:1130px;width:164px"></div>
  <div class="tk" style="left:1305px;font-size:12.5px">Ссылки</div>
  <div class="tk" style="left:1356px;font-size:14px">^</div>
  <div class="abs" style="left:1380px;top:15px;width:15px;height:11px;background:#ddd;border-radius:2px"></div>
  <div class="abs" style="left:1408px;top:13px;width:24px;height:15px;border:1px solid #ddd;border-radius:2px"></div>
  <div class="tk" style="left:1444px;font-size:12.5px">УКР</div>
  <div class="abs" style="left:1484px;top:4px;color:#fff;font-size:12px;text-align:center;line-height:17px">12:05<br>06.12.2022</div>
  <svg class="abs" style="left:1558px;top:12px" width="16" height="18" viewBox="0 0 16 18"><path d="M1 1h14v12H6l-4 4v-4H1z" fill="#eee"/><path d="M4 5h8 M4 8h8" stroke="#1f2a32" stroke-width="1.2"/></svg>
</div>
</body></html>
